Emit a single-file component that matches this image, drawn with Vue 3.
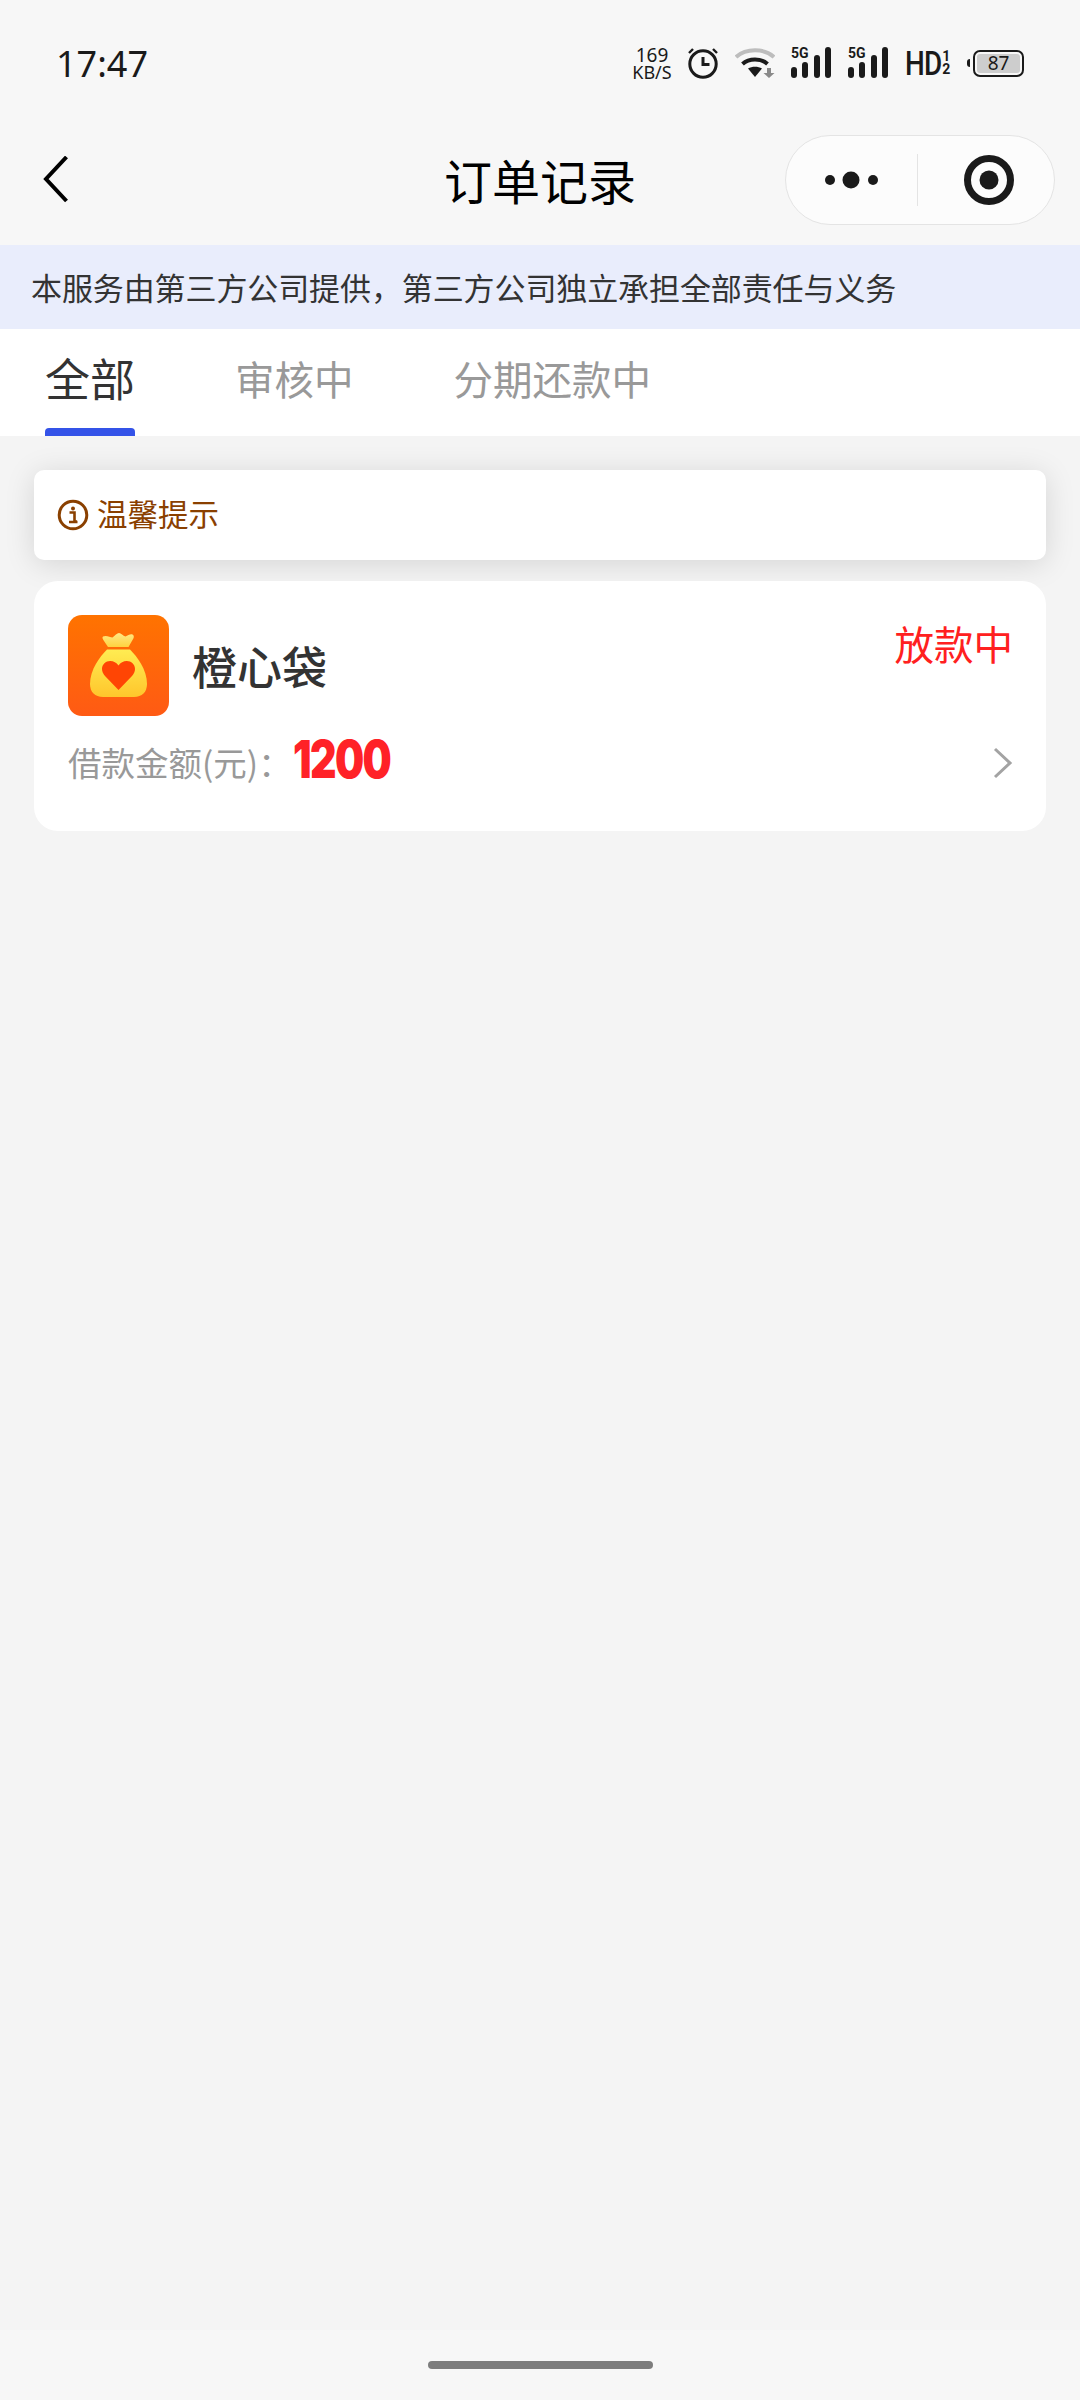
<template>
  <div class="page">
    <!-- 状态栏 -->
    <div class="status_bar">
      <div class="time">17:47</div>
      <div class="status_icons">
        <div class="speed">
          <div class="speed_num">169</div>
          <div class="speed_unit">KB/S</div>
        </div>
        <svg class="alarm" width="32" height="32" viewBox="0 0 32 32">
          <circle cx="16" cy="17" r="13.2" fill="none" stroke="#1a1a1a" stroke-width="3" />
          <path d="M16 10v7.5h6.5" fill="none" stroke="#1a1a1a" stroke-width="3" />
          <path d="M2 6l4-4M30 6l-4-4" fill="none" stroke="#1a1a1a" stroke-width="2.4" />
        </svg>
        <svg class="wifi" width="40" height="32" viewBox="0 0 40 32">
          <path d="M1 10C11 1 29 1 39 10" fill="none" stroke="#bdbdbd" stroke-width="4" />
          <path d="M7.5 17C14 11 26 11 32.5 17" fill="none" stroke="#1a1a1a" stroke-width="4" />
          <path d="M13 21.5C17 19 23 19 27 21.5L20 30z" fill="#1a1a1a" />
          <path d="M32 21h4v5h3.5L34 31l-5.500-5H32z" fill="#8a8a8a" />
        </svg>
        <svg v-for="n in 2" :key="n" class="signal" width="41" height="40" viewBox="0 -4 41 40">
          <text x="0" y="11" class="signal_text">5G</text>
          <rect
            v-for="bar in signalBars"
            :key="bar.x"
            :x="bar.x"
            :y="bar.y"
            width="6"
            :height="31 - bar.y"
            rx="3"
            fill="#1a1a1a"
          />
        </svg>
        <div class="hd">
          <span class="hd_text">HD</span>
          <span class="hd_sub"><span>1</span><span>2</span></span>
        </div>
        <div class="battery">
          <span class="battery_tip"></span>
          <div class="battery_body"><span class="battery_fill">87</span></div>
        </div>
      </div>
    </div>

    <!-- 导航栏 -->
    <div class="nav">
      <svg class="back" width="26" height="48" viewBox="0 0 26 48">
        <path d="M23.500 1 3 23l20.500 22" fill="none" stroke="#000" stroke-width="4" />
      </svg>
      <div class="nav_title">订单记录</div>
      <div class="capsule">
        <div class="capsule_part">
          <svg width="54" height="20" viewBox="0 0 54 20">
            <circle cx="6" cy="10" r="5" fill="#1a1a1a" />
            <circle cx="27" cy="10" r="8.500" fill="#1a1a1a" />
            <circle cx="49" cy="10" r="5" fill="#1a1a1a" />
          </svg>
        </div>
        <div class="capsule_line"></div>
        <div class="capsule_part capsule_target">
          <svg width="52" height="52" viewBox="0 0 52 52">
            <circle cx="26" cy="26" r="21.500" fill="none" stroke="#1a1a1a" stroke-width="7" />
            <circle cx="26" cy="26" r="9.500" fill="#1a1a1a" />
          </svg>
        </div>
      </div>
    </div>

    <div class="notice">本服务由第三方公司提供，第三方公司独立承担全部责任与义务</div>

    <!-- 탭 -->
    <div class="tabs">
      <div v-for="(tab, index) in tabs" :key="tab" :class="['tab', { active: index === 0 }]">
        <span class="tab_text">{{ tab }}</span>
        <span class="tab_line"></span>
      </div>
    </div>

    <div class="content">
      <div class="tip">
        <svg width="32" height="32" viewBox="0 0 32 32">
          <circle cx="16" cy="16" r="13.800" fill="none" stroke="#8a4000" stroke-width="3" />
          <circle cx="16" cy="9.500" r="2" fill="#8a4000" />
          <path d="M12.500 13.500H17.500V22.500H20M12 23H20.500" fill="none" stroke="#8a4000" stroke-width="2.600" />
        </svg>
        <span class="tip_text">温馨提示</span>
      </div>

      <div class="order">
        <div class="order_top">
          <div class="order_logo">
            <svg width="101" height="101" viewBox="0 0 101 101">
              <defs>
                <linearGradient id="bagBody" x1="0" y1="0" x2="0" y2="1">
                  <stop offset="0" stop-color="#ffec52" />
                  <stop offset="1" stop-color="#ffc62c" />
                </linearGradient>
                <linearGradient id="bagKnot" x1="0" y1="0" x2="0" y2="1">
                  <stop offset="0" stop-color="#ffe985" />
                  <stop offset="1" stop-color="#ffd23f" />
                </linearGradient>
              </defs>
              <path
                d="M35 21.500c3-1.500 7 .5 9.500 1 2.500-2 4.500-4.500 6.500-4.500s4 3 6.500 3.500c2.500-1 5-3 7-2 2 1.200 1.500 3.500 0 5.500l-4 7H40l-4-6c-1-1.500-2.300-3.500-1-4.500z"
                fill="url(#bagKnot)"
              />
              <path
                d="M39 34.500h23c7 7 17 20 17 34.500 0 8-5 13-13 13H35c-8 0-13-5-13-13 0-14.500 10-27.500 17-34.500z"
                fill="url(#bagBody)"
              />
              <path
                d="M50.500 75 37 61c-2-2.200-3-4.800-3-7 0-4.700 3.800-8 8.200-8 3.400 0 6.300 1.700 8.300 4.500 2-2.800 4.900-4.500 8.300-4.500 4.400 0 8.200 3.300 8.200 8 0 2.200-1 4.800-3 7z"
                fill="#ff4504"
              />
            </svg>
          </div>
          <div class="order_name">橙心袋</div>
          <div class="order_status">放款中</div>
        </div>
        <div class="order_bottom">
          <span class="order_label">借款金额(元)：</span>
          <span class="order_amount">1200</span>
          <svg class="order_arrow" width="20" height="32" viewBox="0 0 20 32">
            <path d="M2 2l15 14L2 30" fill="none" stroke="#a3a3a3" stroke-width="3" />
          </svg>
        </div>
      </div>
    </div>

    <div class="home_bar"><span class="home_line"></span></div>
  </div>
</template>

<script setup>
const tabs = ['全部', '审核中', '分期还款中']

// 信号格
const signalBars = [
  { x: 0, y: 20 },
  { x: 11, y: 15 },
  { x: 23, y: 8 },
  { x: 34, y: 0 }
]
</script>

<style>
html,
body {
  margin: 0;
  background: #f4f4f4;
}
</style>

<style scoped>
.page {
  width: 1080px;
  min-height: 2400px;
  display: flex;
  flex-direction: column;
  background-color: #f4f4f4;
  font-family: 'Noto Sans CJK SC', 'Noto Sans', sans-serif;
}

.status_bar {
  height: 126px;
  box-sizing: border-box;
  padding: 0 56px 0 56px;
  display: flex;
  align-items: center;
  justify-content: space-between;
  background-color: #f7f7f7;
}

.time {
  font-family: 'Noto Sans', sans-serif;
  font-size: 36px;
  color: #1a1a1a;
}

.status_icons {
  display: flex;
  align-items: center;
  gap: 16px;
}

.speed {
  width: 42px;
  text-align: center;
  font-family: 'Noto Sans', sans-serif;
  color: #1a1a1a;
  margin-right: -2px;
}

.speed_num {
  font-size: 19px;
  line-height: 17px;
}

.speed_unit {
  font-size: 18px;
  line-height: 16px;
}

.signal_text {
  font-family: Roboto, sans-serif;
  font-size: 14px;
  font-weight: 700;
  fill: #1a1a1a;
}

.hd {
  display: flex;
  align-items: center;
  width: 48px;
  color: #1a1a1a;
  margin-right: -2px;
}

.hd_text {
  font-family: Roboto, sans-serif;
  font-size: 34px;
  font-weight: 500;
  line-height: 34px;
  letter-spacing: -1px;
  transform: scaleX(0.82);
  transform-origin: left center;
  margin-right: -7px;
}

.hd_sub {
  display: flex;
  flex-direction: column;
  font-family: Roboto, sans-serif;
  font-size: 14px;
  font-weight: 700;
  line-height: 13px;
}

.battery {
  display: flex;
  align-items: center;
  gap: 3px;
}

.battery_tip {
  width: 3px;
  height: 8px;
  border-radius: 3px 0 0 3px;
  background-color: #1a1a1a;
}

.battery_body {
  width: 51px;
  height: 27px;
  box-sizing: border-box;
  padding: 2px;
  border: 2px solid #1a1a1a;
  border-radius: 7px;
  display: flex;
}

.battery_fill {
  flex: 1;
  background-color: #cdcdcd;
  border-radius: 3px;
  font-family: 'Noto Sans', sans-serif;
  font-size: 19px;
  line-height: 19px;
  text-align: center;
  color: #1a1a1a;
}

.nav {
  position: relative;
  height: 119px;
  box-sizing: border-box;
  padding: 0 25px 12px 43px;
  display: flex;
  align-items: center;
  justify-content: space-between;
  background-color: #f7f7f7;
}

.nav_title {
  position: absolute;
  left: 0;
  right: 0;
  top: 18px;
  text-align: center;
  font-size: 48px;
  line-height: 70px;
  color: #000;
}

.capsule {
  position: relative;
  width: 270px;
  height: 90px;
  box-sizing: border-box;
  border: 1px solid #e4e4e4;
  border-radius: 45px;
  background-color: #fcfcfc;
  display: flex;
  align-items: center;
}

.capsule_part {
  flex: 1 1 0;
  box-sizing: border-box;
  display: flex;
  align-items: center;
  justify-content: center;
}

.capsule_target {
  padding-left: 6px;
}

.capsule_line {
  width: 1px;
  height: 52px;
  background-color: #e4e4e4;
}

.notice {
  height: 84px;
  box-sizing: border-box;
  padding-left: 31px;
  background-color: #e9edfc;
  font-size: 31px;
  letter-spacing: -0.1px;
  line-height: 84px;
  color: #333;
  white-space: nowrap;
}

.tabs {
  height: 107px;
  box-sizing: border-box;
  padding-left: 45px;
  display: flex;
  gap: 100px;
  background-color: #fff;
}

.tab {
  display: flex;
  flex-direction: column;
  align-items: stretch;
  padding-top: 18px;
  font-size: 39.5px;
  color: #999;
}

.tab_text {
  line-height: 62px;
  white-space: nowrap;
}

.tab_line {
  margin-top: auto;
  height: 8px;
  border-radius: 4px 4px 0 0;
}

.tab.active {
  font-size: 45px;
  color: #333;
}

.tab.active .tab_line {
  background-color: #3453e8;
}

.content {
  flex: 1;
  padding: 34px 34px 0;
}

.tip {
  height: 90px;
  box-sizing: border-box;
  padding-left: 23px;
  display: flex;
  align-items: center;
  gap: 8px;
  background-color: #fff;
  border-radius: 10px;
  box-shadow: 0 4px 30px rgba(0, 0, 0, 0.13);
  font-size: 30.5px;
  color: #8a4000;
}

.tip_text {
  line-height: 44px;
  margin-top: -4px;
}

.order {
  position: relative;
  margin-top: 21px;
  height: 250px;
  box-sizing: border-box;
  padding: 34px 33px 0 34px;
  background-color: #fff;
  border-radius: 24px;
}

.order_top {
  display: flex;
  align-items: center;
}

.order_logo {
  width: 101px;
  height: 101px;
  border-radius: 14px;
  overflow: hidden;
  background: linear-gradient(180deg, #ff7300, #ff5a14);
  flex-shrink: 0;
}

.order_logo svg {
  display: block;
}

.order_name {
  margin-left: 23px;
  font-size: 45px;
  font-weight: 500;
  line-height: 64px;
  color: #333;
}

.order_status {
  margin-left: auto;
  align-self: flex-start;
  font-size: 39.5px;
  line-height: 56px;
  color: #ff2020;
}

.order_bottom {
  margin-top: 18px;
  display: flex;
  align-items: center;
  height: 54px;
}

.order_label {
  font-size: 33.5px;
  color: #999;
  white-space: nowrap;
}

.order_amount {
  margin-left: 1px;
  margin-top: -3px;
  font-family: Inter, sans-serif;
  font-size: 52px;
  font-weight: 900;
  letter-spacing: -2px;
  color: #ff2227;
  display: inline-block;
  transform: scaleX(0.79);
  transform-origin: left center;
}

.order_arrow {
  margin-left: auto;
  margin-top: 4px;
}

.home_bar {
  height: 70px;
  background-color: #f7f7f7;
  display: flex;
  justify-content: center;
  padding-top: 31px;
  box-sizing: border-box;
}

.home_line {
  width: 225px;
  height: 8px;
  border-radius: 4px;
  background-color: #7d7d7d;
}
</style>
